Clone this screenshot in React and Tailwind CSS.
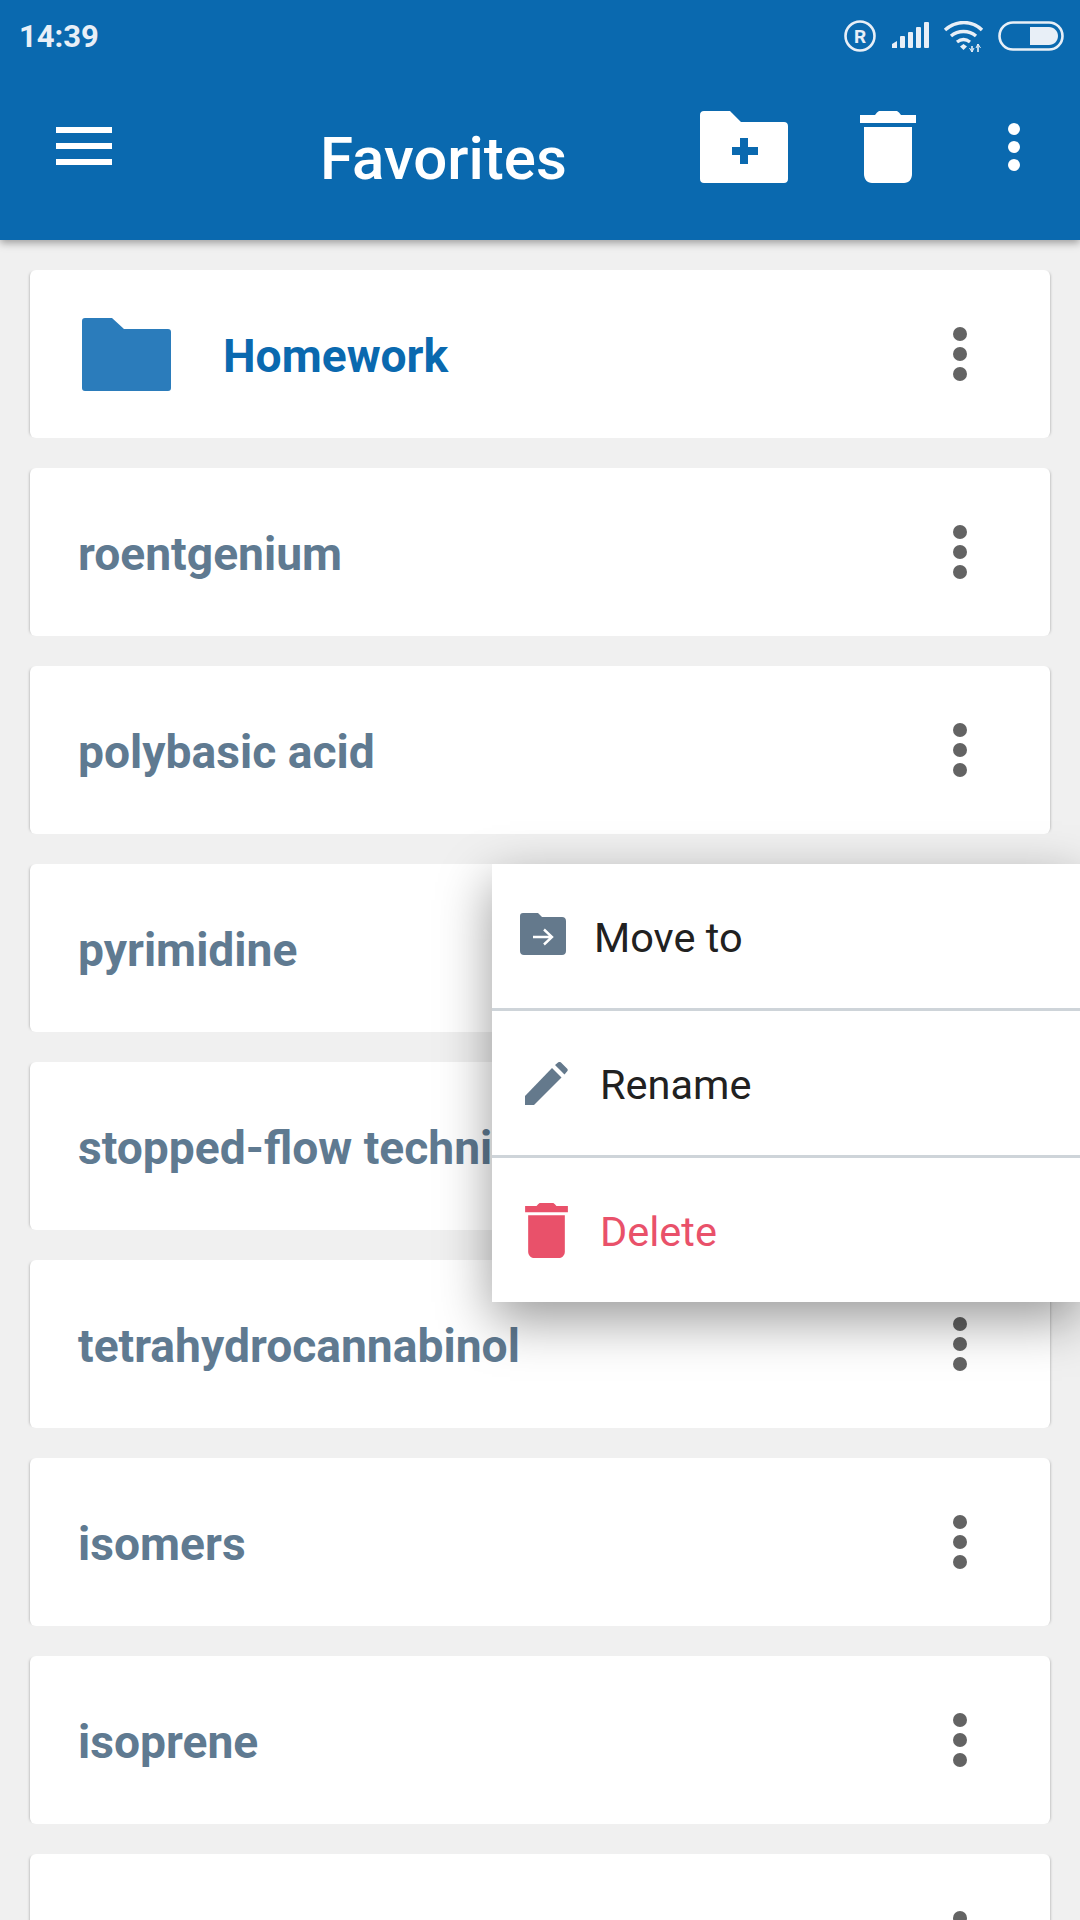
import React from 'react';

const ITEMS = [
  'roentgenium',
  'polybasic acid',
  'pyrimidine',
  'stopped-flow technique',
  'tetrahydrocannabinol',
  'isomers',
  'isoprene',
  '',
];

function Dots({ color = '#636363' }) {
  return (
    <svg width="14" height="54" viewBox="0 0 14 54" fill={color}>
      <circle cx="7" cy="7" r="7" />
      <circle cx="7" cy="27" r="7" />
      <circle cx="7" cy="47" r="7" />
    </svg>
  );
}

function TrashIcon({ color, className }) {
  return (
    <svg className={className} viewBox="0 0 56 72" fill={color}>
      <path d="M15 4 17 1.5 19 0H37L39 1.5 41 4H56V12H0V4Z" />
      <path d="M4 16H52V63C52 68 49 72 44 72H12C7 72 4 68 4 63Z" />
    </svg>
  );
}

function StatusIcons() {
  return (
    <div className="flex items-start">
      {/* registered mark */}
      <svg width="32" height="32" viewBox="0 0 32 32" className="mt-[20px]">
        <circle cx="16" cy="16" r="14.500" fill="none" stroke="#e8eff7" strokeWidth="2.6" />
        <text x="16" y="23" textAnchor="middle" fontSize="19" fontWeight="700" fill="#e8eff7" fontFamily="Roboto, sans-serif">R</text>
      </svg>
      {/* signal */}
      <svg width="38" height="28" viewBox="0 0 38 28" fill="#e8eff7" className="ml-[16px] mt-[21px]">
        <path d="M0 23 5 20V27H0Z" />
        <rect x="8" y="15" width="5" height="12" rx="1" />
        <rect x="16" y="11" width="5" height="16" rx="1" />
        <rect x="24" y="6" width="5" height="21" rx="1" />
        <rect x="32" y="1" width="5" height="26" rx="1" />
      </svg>
      {/* wifi */}
      <svg width="44" height="32" viewBox="0 0 44 32" fill="none" stroke="#e8eff7" strokeWidth="3.4" className="ml-[13px] mt-[21px]">
        <path d="M2 9C13 -1 29 -1 39 9" />
        <path d="M8 15C15 9 26 9 33 15" />
        <path d="M14 21C18 18 23 18 27 21" />
        <path d="M17 25.5 20.5 23 24 25.5 20.5 29Z" fill="#e8eff7" stroke="none" />
        <path d="M29 25V31M35 23V31" strokeWidth="1.6" />
        <path d="M26.5 27 29 31 31 27M33 27 35 23 37.5 27" strokeWidth="1" />
      </svg>
      {/* battery */}
      <svg width="66" height="30" viewBox="0 0 66 30" fill="none" className="ml-[11px] mt-[21px]">
        <rect x="1.5" y="1.5" width="63" height="27" rx="13.5" stroke="#e8eff7" strokeWidth="2.6" />
        <path d="M32 6H51C56 6 60 10 60 15S56 24 51 24H32Z" fill="#e8eff7" />
      </svg>
    </div>
  );
}

function Card({ name }) {
  return (
    <div className="flex h-[168px] shrink-0 items-center justify-between rounded-[6px] bg-white pl-[48px] pr-[83px] shadow-[-3px_0_3px_-3px_rgba(0,0,0,0.35),3px_0_3px_-3px_rgba(0,0,0,0.35)]">
      <span className="mt-[5px] text-[46.2px] font-bold text-[#5f7a91]">{name}</span>
      <Dots />
    </div>
  );
}

export default function App() {
  return (
    <div className="relative h-[1920px] w-[1080px] overflow-hidden bg-[#f0f0f0] font-['Roboto',sans-serif]">
      {/* top bar */}
      <header className="relative z-10 h-[240px] bg-[#0a69af] shadow-[0_3px_8px_rgba(0,0,0,0.35)]">
        <div className="flex h-[72px] justify-between pl-[19px] pr-[16px]">
          <span className="mt-[17px] text-[31px] leading-[40px] font-bold text-[#e8eff7]">14:39</span>
          <StatusIcons />
        </div>
        <div className="flex items-start pl-[56px]">
          <div className="mt-[55px] flex w-[56px] flex-col gap-[10px]">
            <div className="h-[6px] bg-white" />
            <div className="h-[6px] bg-white" />
            <div className="h-[6px] bg-white" />
          </div>
          <h1 className="ml-[208px] mt-[52px] w-[380px] text-[60px] leading-[70px] font-medium text-white">Favorites</h1>
          <svg className="mt-[39px] h-[72px] w-[88px]" viewBox="0 0 88 72" fill="white">
            <path
              fillRule="evenodd"
              d="M4 0H30L41 11H84C86.5 11 88 12.5 88 15V68C88 70.5 86.5 72 84 72H4C1.5 72 0 70.5 0 68V4C0 1.5 1.500 0 4 0ZM40 27V36H32V44H40V53H48V44H58V36H48V27Z"
            />
          </svg>
          <TrashIcon color="white" className="ml-[72px] mt-[39px] h-[72px] w-[56px]" />
          <div className="ml-[92px] mt-[51px]">
            <svg width="12" height="48" viewBox="0 0 12 48" fill="white">
              <circle cx="6" cy="6" r="6" />
              <circle cx="6" cy="24" r="6" />
              <circle cx="6" cy="42" r="6" />
            </svg>
          </div>
        </div>
      </header>

      {/* favorites list */}
      <main className="flex flex-col gap-[30px] px-[30px] pt-[30px]">
        <div className="flex h-[168px] shrink-0 items-center justify-between rounded-[6px] bg-white pl-[52px] pr-[83px] shadow-[-3px_0_3px_-3px_rgba(0,0,0,0.35),3px_0_3px_-3px_rgba(0,0,0,0.35)]">
          <svg className="h-[73px] w-[89px] shrink-0" viewBox="0 0 89 73" fill="#2b7cbb">
            <path d="M3 0H30L42 11H86C88 11 89 12 89 14V70C89 72 88 73 86 73H3C1 73 0 72 0 70V3C0 1 1 0 3 0Z" />
          </svg>
          <span className="ml-[52px] mr-auto mt-[5px] text-[46.2px] font-bold text-[#0a69af]">Homework</span>
          <Dots />
        </div>
        {ITEMS.map((item, i) => (
          <Card key={i} name={item} />
        ))}
      </main>

      {/* context menu */}
      <div className="absolute left-[492px] top-[864px] z-20 flex h-[438px] w-[588px] flex-col bg-white shadow-[0_18px_50px_rgba(0,0,0,0.4)]">
        <div className="flex h-[147px] items-center border-b-[3px] border-[#ced4d9] pl-[28px]">
          <svg className="mb-[4px] h-[42px] w-[46px]" viewBox="0 0 46 42">
            <path
              fill="#64798c"
              d="M3 0H18L22 4H42C44.500 4 46 5.500 46 8V38C46 40.500 44.500 42 42 42H4C1.500 42 0 40.500 0 38V3C0 1 1 0 3 0Z"
            />
            <path d="M13 24H31M24 16.500 32 24 24 31.500" fill="none" stroke="white" strokeWidth="2.4" />
          </svg>
          <span className="ml-[28px] mt-[3px] text-[41.5px] leading-[48px] text-[#212121]">Move to</span>
        </div>
        <div className="flex h-[147px] items-center border-b-[3px] border-[#ced4d9] pl-[33px]">
          <svg className="h-[43px] w-[43px]" viewBox="0 0 43 43" fill="#64798c">
            <path d="M0 34 27 6 36.500 15.500 9 43H0Z" />
            <path d="M30 3 33 0.500C34 -0.300 35 -0.300 36 0.500L42 6.500C43 7.500 43 8.500 42 9.500L39.500 12.500Z" />
          </svg>
          <span className="ml-[32px] mt-[3px] text-[41.5px] leading-[48px] text-[#212121]">Rename</span>
        </div>
        <div className="flex flex-1 items-center pl-[33px]">
          <TrashIcon color="#e9516a" className="h-[55px] w-[43px]" />
          <span className="ml-[32px] mt-[3px] text-[41.5px] leading-[48px] text-[#e9516a]">Delete</span>
        </div>
      </div>
    </div>
  );
}
